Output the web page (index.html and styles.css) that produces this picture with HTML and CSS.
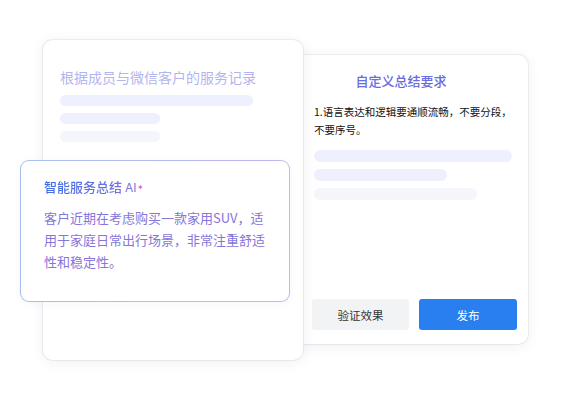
FILE: index.html
```html
<!DOCTYPE html>
<html lang="zh">
<head>
<meta charset="utf-8">
<link rel="stylesheet" href="styles.css">
</head>
<body>
<div class="stage">
  <div class="card card-right">
    <div class="r-title">自定义总结要求</div>
    <div class="r-text">1.语言表达和逻辑要通顺流畅，不要分段，<br>不要序号。</div>
    <div class="bars r-bars">
      <div class="bar" style="width:198px"></div>
      <div class="bar" style="width:133px"></div>
      <div class="bar pale" style="width:163px"></div>
    </div>
    <div class="spacer"></div>
    <div class="btns">
      <div class="btn btn-gray">验证效果</div>
      <div class="btn btn-blue">发布</div>
    </div>
  </div>
  <div class="card card-left">
    <div class="l-title">根据成员与微信客户的服务记录</div>
    <div class="bars l-bars">
      <div class="bar" style="width:193px"></div>
      <div class="bar" style="width:100px"></div>
      <div class="bar pale" style="width:100px"></div>
    </div>
  </div>
  <div class="float">
    <div class="f-title"><span class="grad">智能服务总结</span> <span class="ai">AI</span><span class="star">✦</span></div>
    <div class="f-text">客户近期在考虑购买一款家用SUV，适用于家庭日常出行场景，非常注重舒适性和稳定性。</div>
  </div>
</div>
</body>
</html>
```
FILE: styles.css
```css
* { box-sizing: border-box; margin: 0; padding: 0; }
html, body { width: 570px; height: 400px; background: #ffffff; overflow: hidden; }
body { font-family: "Noto Sans CJK SC", "Noto Sans", sans-serif; }
.stage { position: relative; width: 570px; height: 400px; }
.card {
  position: absolute;
  background: #ffffff;
  border-radius: 10px;
  box-shadow: 0 2px 14px rgba(40, 40, 90, 0.07), 0 0 0 1px rgba(230, 230, 240, 0.6);
}
.card-left {
  left: 43px; top: 40px; width: 260px; height: 320px;
  padding: 27px 17px 0 17px;
  z-index: 2;
}
.card-right {
  left: 290px; top: 55px; width: 238px; height: 289px;
  padding: 17px 11px 14px 22px;
  display: flex; flex-direction: column;
  z-index: 1;
}
.l-title { font-size: 14px; line-height: 20px; color: #b3b5ef; }
.bars { display: flex; flex-direction: column; }
.bar { height: 11px; border-radius: 6px; background: #eff0fd; }
.bar.pale { background: #f5f5fc; }
.l-bars { margin-top: 8px; gap: 7px; }
.r-title { font-size: 13px; line-height: 18px; color: #676ce0; text-align: center; margin-right: 27px; font-weight: 500; }
.r-text { margin-top: 13px; font-size: 10.5px; line-height: 18px; color: #111111; padding-left: 2px; }
.r-bars { margin-top: 11px; gap: 7px; padding-left: 2px; }
.r-bars .bar { height: 12px; }
.spacer { flex: 1; }
.btns { display: flex; gap: 10px; }
.btn {
  width: 97px; height: 31px; border-radius: 3px;
  display: flex; align-items: center; justify-content: center;
  font-size: 11.5px;
}
.btn-gray { background: #f2f3f5; color: #333333; }
.btn-blue { background: #2a7ff0; color: #ffffff; width: 98px; }
.float {
  position: absolute; left: 20px; top: 160px; width: 270px; height: 142px;
  border-radius: 9px;
  border: 1px solid transparent;
  background:
    linear-gradient(#ffffff, #ffffff) padding-box,
    linear-gradient(90deg, #a6bdf2, #c3b6ee) border-box;
  padding: 16px 20px 0 23px;
  z-index: 3;
  box-shadow: 0 2px 10px rgba(60, 60, 140, 0.04);
}
.f-title { font-size: 13px; line-height: 20px; font-weight: 500; }
.grad {
  background: linear-gradient(90deg, #3d6ee6, #7470e2);
  -webkit-background-clip: text; background-clip: text; color: transparent;
}
.ai { color: #7f70e0; font-weight: 400; font-family: "Inter", "Noto Sans", sans-serif; font-size: 12px; }
.star { color: #d36ad8; font-size: 8px; vertical-align: 2px; margin-left: 1px; }
.f-text { margin-top: 9px; font-size: 13px; line-height: 22px; color: #8576da; }
```
